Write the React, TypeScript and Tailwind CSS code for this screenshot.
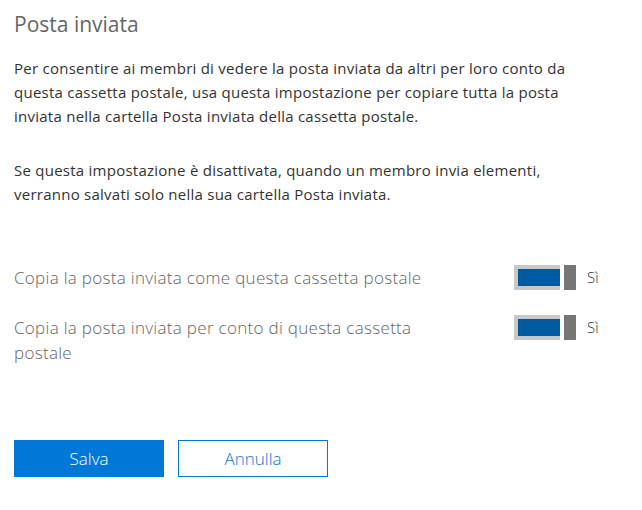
import React from 'react';

function Toggle() {
  return (
    <div className="flex items-start">
      <div className="flex h-[25px] w-[46px] border-y-4 border-l-4 border-[#c8c8c8] bg-[#005a9e]" />
      <div className="ml-[4px] h-[25px] w-[12px] bg-[#767676]" />
      <span className="ml-[11px] text-[15px] leading-[25px] font-light text-[#333]">Sì</span>
    </div>
  );
}

export default function App() {
  return (
    <div
      className="min-h-[510px] w-[642px] bg-white pl-[14px] pt-[10px]"
      style={{ fontFamily: '"Open Sans", "Noto Sans", sans-serif' }}
    >
      <h1 className="text-[21px] leading-[28px] font-normal text-[#666]">Posta inviata</h1>

      <p className="mt-[18px] text-[15px] leading-[24px] tracking-[0.25px] text-[#333]">
        Per consentire ai membri di vedere la posta inviata da altri per loro conto da
        <br />
        questa cassetta postale, usa questa impostazione per copiare tutta la posta
        <br />
        inviata nella cartella Posta inviata della cassetta postale.
      </p>

      <p className="mt-[30px] text-[15px] leading-[24px] tracking-[0.25px] text-[#333]">
        Se questa impostazione è disattivata, quando un membro invia elementi,
        <br />
        verranno salvati solo nella sua cartella Posta inviata.
      </p>

      <div className="mt-[59px] flex flex-col gap-[25px]">
        <div className="flex items-start">
          <div className="w-[500px] text-[17px] leading-[25px] font-light tracking-[0.3px] text-[#666]">
            Copia la posta inviata come questa cassetta postale
          </div>
          <Toggle />
        </div>
        <div className="flex items-start">
          <div className="w-[500px] text-[17px] leading-[25px] font-light tracking-[0.3px] text-[#666]">
            Copia la posta inviata per conto di questa cassetta
            <br />
            postale
          </div>
          <Toggle />
        </div>
      </div>

      <div className="mt-[75px] flex gap-[14px]">
        <button className="h-[37px] w-[150px] bg-[#0078d7] text-[17px] font-light text-white">Salva</button>
        <button className="h-[37px] w-[150px] border border-[#0078d7] bg-white text-[17px] font-light text-[#0078d7]">
          Annulla
        </button>
      </div>
    </div>
  );
}
